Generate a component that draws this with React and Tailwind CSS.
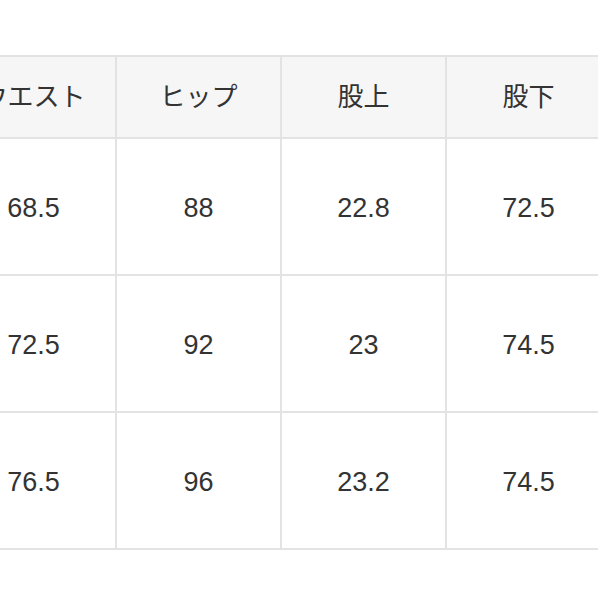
const headers = ['ウエスト', 'ヒップ', '股上', '股下']

const rows = [
  ['68.5', '88', '22.8', '72.5'],
  ['72.5', '92', '23', '74.5'],
  ['76.5', '96', '23.2', '74.5'],
]

export default function App() {
  return (
    <div className="w-[598px] h-[598px] overflow-hidden bg-white pt-[55px]">
      <div
        className="ml-[-50px] w-max grid grid-cols-[163px_163px_163px_163px] grid-rows-[80px_135px_135px_135px] gap-[2px] p-[2px] bg-[#e3e3e3] text-[#333333]"
        style={{ fontFamily: '"Liberation Sans", "Noto Sans CJK JP", sans-serif' }}
      >
        {headers.map((h) => (
          <div key={h} className="bg-[#f6f6f6] flex items-center justify-center text-[26px]">
            {h}
          </div>
        ))}
        {rows.map((row, i) =>
          row.map((v, j) => (
            <div key={`${i}-${j}`} className="bg-white flex items-center justify-center pt-[4px] text-[27px]">
              {v}
            </div>
          ))
        )}
      </div>
    </div>
  )
}
